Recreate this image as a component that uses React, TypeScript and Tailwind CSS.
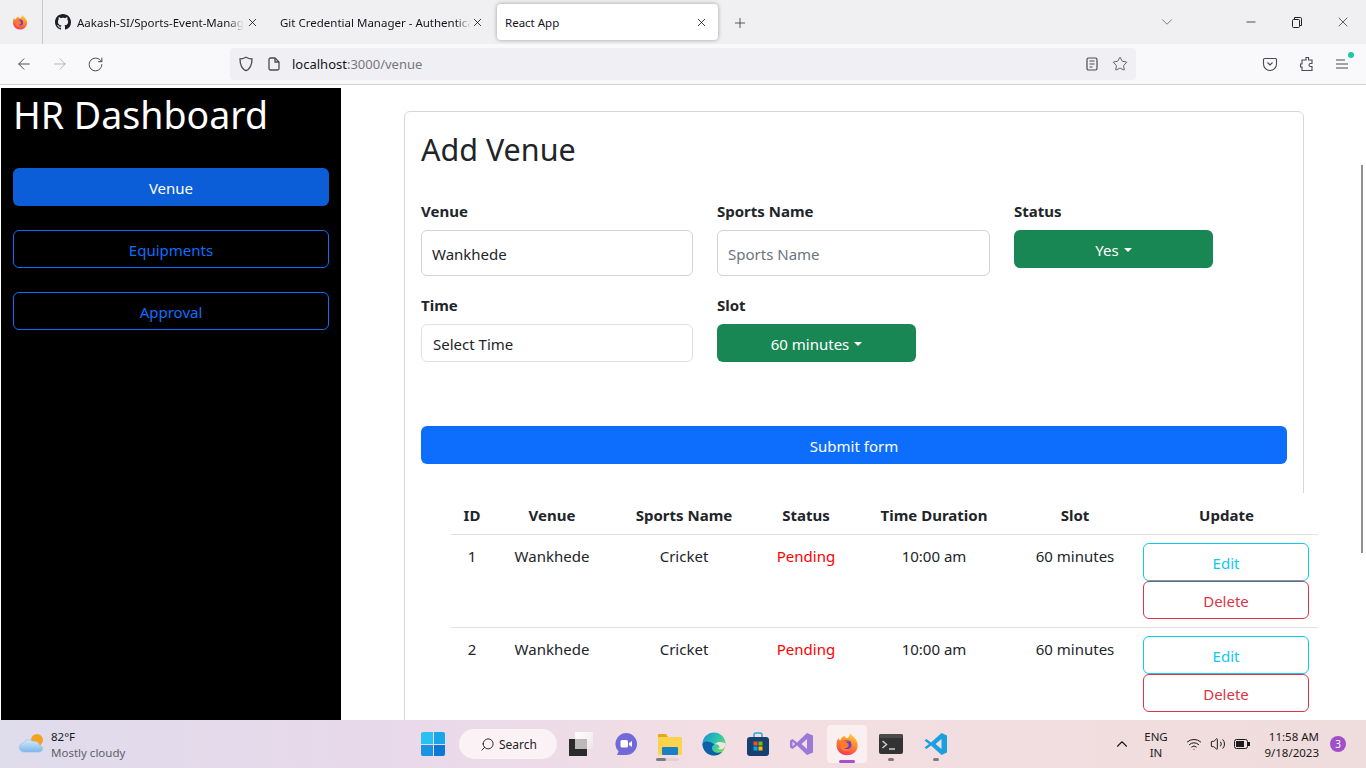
import { X, Plus, ChevronDown, ChevronUp, Minus, ArrowLeft, ArrowRight, RotateCw, Star, Search, Wifi, Volume2 } from "lucide-react";

const FONT = "font-['Noto_Sans','Open_Sans',sans-serif]";

const ROWS = [
  { id: 1, venue: "Wankhede", sport: "Cricket", status: "Pending", time: "10:00 am", slot: "60 minutes" },
  { id: 2, venue: "Wankhede", sport: "Cricket", status: "Pending", time: "10:00 am", slot: "60 minutes" },
];

function FirefoxLogo({ size = 16 }: { size?: number }) {
  return (
    <svg width={size} height={size} viewBox="0 0 32 32">
      <defs>
        <linearGradient id="ffBody" x1="0.7" y1="0" x2="0.3" y2="1">
          <stop offset="0" stopColor="#ffd43a" />
          <stop offset="0.45" stopColor="#ff8a2a" />
          <stop offset="1" stopColor="#f0365c" />
        </linearGradient>
      </defs>
      <path d="M20 1c1 3 4 4 6 7 3 3 5 7 4 12-1 7-7 11-14 11C8 31 2 25 2 17c0-4 1-7 3-9 0 2 1 3 2 3 1-3 3-5 6-6 0 2 2 3 4 3 2-2 3-4 3-7z" fill="url(#ffBody)" />
      <circle cx="15.5" cy="17" r="6.5" fill="#6e3bd0" />
      <path d="M9 14c2-3 8-4 11-1-3-1-5 0-6 1 3 0 5 2 4 5-1 2-4 3-6 2 4 4 11 1 11-5 0 6-6 11-12 9-4-2-5-7-2-11z" fill="#ff7a2a" />
    </svg>
  );
}

function GithubMark() {
  return (
    <svg width={16} height={16} viewBox="0 0 16 16" fill="#1b1f24">
      <path d="M8 0C3.58 0 0 3.58 0 8c0 3.54 2.29 6.53 5.47 7.59.4.07.55-.17.55-.38 0-.19-.01-.82-.01-1.49-2.01.37-2.53-.49-2.69-.94-.09-.23-.48-.94-.82-1.13-.28-.15-.68-.52-.01-.53.63-.01 1.08.58 1.23.82.72 1.21 1.87.87 2.33.66.07-.52.28-.87.51-1.07-1.78-.2-3.64-.89-3.64-3.95 0-.87.31-1.59.82-2.15-.08-.2-.36-1.02.08-2.12 0 0 .67-.21 2.2.82.64-.18 1.32-.27 2-.27s1.36.09 2 .27c1.53-1.04 2.2-.82 2.2-.82.44 1.1.16 1.92.08 2.12.51.56.82 1.27.82 2.15 0 3.07-1.87 3.75-3.65 3.95.29.25.54.73.54 1.48 0 1.07-.01 1.93-.01 2.2 0 .21.15.46.55.38A8.01 8.01 0 0016 8c0-4.42-3.58-8-8-8z" />
    </svg>
  );
}

function BrowserTabs() {
  return (
    <div className="flex h-[44px] bg-[#f0f0f2] text-[11.5px] text-[#15141a]">
      <div className="flex w-[43px] items-center justify-center border-r border-[#c8c8cc] pr-[3px]">
        <FirefoxLogo />
      </div>
      <div className="flex w-[226px] items-center pl-[12px]">
        <GithubMark />
        <span className="ml-[6px] w-[167px] overflow-hidden whitespace-nowrap pt-[1px] [mask-image:linear-gradient(90deg,#000_90%,transparent)]">Aakash-SI/Sports-Event-Manage</span>
        <X size={13} strokeWidth={1.5} className="ml-[2px]" />
      </div>
      <div className="flex w-[228px] items-center pl-[11px]">
        <span className="w-[191px] overflow-hidden whitespace-nowrap pt-[1px] [mask-image:linear-gradient(90deg,#000_92%,transparent)]">Git Credential Manager - Authentica</span>
        <X size={13} strokeWidth={1.5} />
      </div>
      <div className="mt-[4px] flex h-[36px] w-[221px] items-center justify-between rounded-[4px] bg-white pl-[8px] pr-[10px] shadow-[0_0_4px_rgba(0,0,0,0.35)]">
        <span className="pt-[1px]">React App</span>
        <X size={13} strokeWidth={1.5} />
      </div>
      <Plus size={16} strokeWidth={1.25} className="ml-[14px] mt-[15px] text-[#3a3a3e]" />
      <ChevronDown size={18} strokeWidth={1} className="ml-[410px] mt-[13px] text-[#55555a]" />
      <Minus size={14} strokeWidth={1.25} className="ml-[68px] mt-[15px]" />
      <svg width={12} height={12} viewBox="0 0 12 12" fill="none" stroke="#222" className="ml-[33px] mt-[16px]">
        <rect x="1.5" y="3.5" width="7" height="8" rx="1" />
        <path d="M3.5 3.5V1.5h6a1 1 0 011 1v7h-2" />
      </svg>
      <X size={16} strokeWidth={1} className="ml-[32px] mt-[14px]" />
    </div>
  );
}

function BrowserToolbar() {
  return (
    <div className="flex h-[41px] items-center border-b border-[#cfcfd4] bg-[#f9f9fb] text-[#4a4a50]">
      <ArrowLeft size={18} strokeWidth={1.3} className="ml-[15px]" />
      <ArrowRight size={18} strokeWidth={1.3} className="ml-[18px] text-[#b4b4b8]" />
      <RotateCw size={17} strokeWidth={1.4} className="ml-[18px]" />
      <div className="ml-[126px] flex h-[32px] w-[906px] items-center rounded-[4px] bg-[#f0f0f4] text-[13px]">
        <svg width={16} height={16} viewBox="0 0 16 16" fill="none" stroke="#4a4a50" strokeWidth="1.3" className="ml-[8px]">
          <path d="M8 1.3c2 1.2 4 1.7 6 1.7 0 6-2 10-6 11.7C4 13 2 9 2 3c2 0 4-.5 6-1.7z" />
        </svg>
        <svg width={14} height={14} viewBox="0 0 14 14" fill="none" stroke="#4a4a50" strokeWidth="1.3" className="ml-[13px]">
          <path d="M2 2.5a1.5 1.5 0 011.5-1.5H8l4 4v6.5a1.5 1.5 0 01-1.5 1.5h-7A1.5 1.5 0 012 11.500z" />
          <path d="M8 1v4h4" />
        </svg>
        <span className="ml-[11px] pt-[1px] text-[#15141a]">localhost</span>
        <span className="pt-[1px] text-[#77777c]">:3000/venue</span>
        <svg width={14} height={14} viewBox="0 0 14 14" fill="none" stroke="#4a4a50" strokeWidth="1.2" className="ml-auto">
          <rect x="2" y="1" width="10" height="12" rx="1.5" />
          <path d="M4.500 4h5M4.500 7h5M4.500 10h3" />
        </svg>
        <Star size={16} strokeWidth={1.3} className="ml-[13px] mr-[8px]" />
      </div>
      <svg width={16} height={16} viewBox="0 0 16 16" fill="none" stroke="#4a4a50" strokeWidth="1.1" className="ml-[126px]">
        <path d="M2.500 2.500h11a1 1 0 011 1V8a6.500 6.500 0 01-13 0V3.500a1 1 0 011-1z" />
        <path d="M5.500 6.500L8 9l2.500-2.500" />
      </svg>
      <svg width={16} height={16} viewBox="0 0 16 16" fill="none" stroke="#4a4a50" strokeWidth="1.1" className="ml-[21px]">
        <path d="M7 1.500h2.500V4H13v3.500h-1.500a1.500 1.500 0 000 3H13V14.500H3V11H1.500V8H3V4h4z" />
      </svg>
      <div className="relative ml-[19px]">
        <svg width={16} height={16} viewBox="0 0 16 16" fill="none" stroke="#4a4a50" strokeWidth="1.1">
          <path d="M2 4h9M2 8h12M2 12h12" />
        </svg>
        <span className="absolute -right-[4px] -top-[4px] h-[6px] w-[6px] rounded-full bg-[#1fc9a6]" />
      </div>
    </div>
  );
}

function Sidebar() {
  return (
    <aside className="ml-px mt-[3px] flex h-[632px] w-[340px] flex-col bg-black px-[12px]">
      <h1 className="mt-[2px] text-[37.5px] leading-[50px] text-white">HR Dashboard</h1>
      <button className="mt-[28px] h-[38px] w-[316px] rounded-[6px] bg-[#0b5ed7] pt-[2px] text-[15px] text-white">Venue</button>
      <button className="mt-[24px] h-[38px] w-[316px] rounded-[6px] border border-[#0d6efd] pt-[2px] text-[15px] text-[#0d6efd]">Equipments</button>
      <button className="mt-[24px] h-[38px] w-[316px] rounded-[6px] border border-[#0d6efd] pt-[2px] text-[15px] text-[#0d6efd]">Approval</button>
    </aside>
  );
}

function Field({ label, children }: { label: string; children: React.ReactNode }) {
  return (
    <div>
      <label className="mb-[8px] block text-[15px] font-bold leading-[21px] text-[#212529]">{label}</label>
      {children}
    </div>
  );
}

function GreenDropdown({ text }: { text: string }) {
  return (
    <button className="flex h-[38px] w-[199px] items-center justify-center rounded-[6px] bg-[#198754] pt-[2px] text-[15px] text-white">
      {text}
      <span className="ml-[5px] h-0 w-0 border-x-[4.500px] border-t-[4.500px] border-x-transparent border-t-white" />
    </button>
  );
}

function VenueTable() {
  return (
    <div className="relative -mr-[31px] ml-[30px] mt-[29px] bg-white">
      <table className="w-[867px] table-fixed border-collapse text-center text-[15px] text-[#212529]">
        <colgroup>
          <col className="w-[42px]" />
          <col className="w-[118px]" />
          <col className="w-[146px]" />
          <col className="w-[98px]" />
          <col className="w-[158px]" />
          <col className="w-[124px]" />
          <col className="w-[181px]" />
        </colgroup>
        <thead>
          <tr className="h-[41px] border-b border-[#dee2e6]">
            {["ID", "Venue", "Sports Name", "Status", "Time Duration", "Slot", "Update"].map((h) => (
              <th key={h} className="pt-[3px] font-bold last:pr-[2px]">{h}</th>
            ))}
          </tr>
        </thead>
        <tbody>
          {ROWS.map((r) => (
            <tr key={r.id} className="border-b border-[#dee2e6] align-top">
              <td className="pt-[10px]">{r.id}</td>
              <td className="pt-[10px]">{r.venue}</td>
              <td className="pt-[10px]">{r.sport}</td>
              <td className="pt-[10px] text-[#ff0000]">{r.status}</td>
              <td className="pt-[10px]">{r.time}</td>
              <td className="pt-[10px]">{r.slot}</td>
              <td className="py-[8px] pl-[6px]">
                <button className="block h-[38px] w-[166px] rounded-[6px] border border-[#0dcaf0] pt-[4px] text-[#0dcaf0]">Edit</button>
                <button className="block h-[38px] w-[166px] rounded-[6px] border border-[#dc3545] pt-[4px] text-[#dc3545]">Delete</button>
              </td>
            </tr>
          ))}
        </tbody>
      </table>
    </div>
  );
}

function VenuePage() {
  return (
    <main className="ml-[63px] mt-[26px] w-[900px]">
      <div className="rounded-[6px] border border-[#d5d8db] px-[16px] pt-[16px] pb-[40px]">
        <h2 className="text-[30.5px] leading-[42px] text-[#212529]">Add Venue</h2>
        <div className="mt-[31px] grid grid-cols-[272px_273px_1fr] gap-x-[24px]">
          <Field label="Venue">
            <div className="flex h-[46px] items-center rounded-[6px] border border-[#ced4da] px-[10px] pt-[2px] text-[15px] text-[#212529]">Wankhede</div>
          </Field>
          <Field label="Sports Name">
            <div className="flex h-[46px] items-center rounded-[6px] border border-[#ced4da] px-[10px] pt-[2px] text-[15px] text-[#6c757d]">Sports Name</div>
          </Field>
          <Field label="Status">
            <GreenDropdown text="Yes" />
          </Field>
          <div className="mt-[19px]">
            <Field label="Time">
              <div className="flex h-[38px] items-center rounded-[6px] border border-[#dee2e6] px-[11px] pt-[2px] text-[15px] text-[#212529]">Select Time</div>
            </Field>
          </div>
          <div className="mt-[19px]">
            <Field label="Slot">
              <GreenDropdown text="60 minutes" />
            </Field>
          </div>
        </div>
        <button className="mt-[64px] h-[38px] w-full rounded-[6px] bg-[#0d6efd] pt-[2px] text-[15px] text-white">Submit form</button>
        <VenueTable />
      </div>
    </main>
  );
}

function WeatherIcon() {
  return (
    <svg width={28} height={24} viewBox="0 0 28 24">
      <defs>
        <linearGradient id="cloud" x1="0" y1="0" x2="0" y2="1">
          <stop offset="0" stopColor="#d9e9f8" />
          <stop offset="1" stopColor="#7db6ea" />
        </linearGradient>
      </defs>
      <circle cx="19" cy="8" r="6" fill="#f5a11d" />
      <path d="M6 20a4.500 4.500 0 01-.5-9C7 7.500 12 6.500 15 9.500c3-1 6.500 1 6.500 4 2.500 0 3 1.500 3 3.500s-1.500 3-3.500 3z" fill="url(#cloud)" stroke="#8fc0ec" strokeWidth="0.6" />
    </svg>
  );
}

function TaskDot() {
  return <span className="absolute -bottom-[5px] left-[9px] h-[3px] w-[6px] rounded-full bg-[#7f7a7c]" />;
}

function TaskbarApps() {
  return (
    <div className="ml-[283px] flex items-center">
      <div className="grid h-[24px] w-[24px] grid-cols-2 gap-[1px]">
        <span className="rounded-tl-[2px] bg-[#29c0f2]" />
        <span className="rounded-tr-[2px] bg-[#1aa5ea]" />
        <span className="rounded-bl-[2px] bg-[#1993e2]" />
        <span className="rounded-br-[2px] bg-[#0b78d4]" />
      </div>
      <div className="ml-[14px] flex h-[30px] w-[98px] items-center rounded-full bg-[#fbf2f6] pl-[21px] text-[12px] text-[#222]">
        <Search size={15} strokeWidth={1.5} className="-scale-x-100" />
        <span className="ml-[4px] pt-[2px]">Search</span>
      </div>
      <svg width={24} height={24} viewBox="0 0 24 24" className="ml-[12px]">
        <defs>
          <linearGradient id="taskLight" x1="0" y1="0" x2="1" y2="1">
            <stop offset="0" stopColor="#ffffff" />
            <stop offset="1" stopColor="#ebe6e8" />
          </linearGradient>
        </defs>
        <rect x="0" y="7" width="18" height="17" fill="#2a2a2a" />
        <rect x="6" y="0" width="18" height="17" fill="url(#taskLight)" />
        <rect x="6" y="7" width="12" height="10" fill="#bcb8ba" />
      </svg>
      <svg width={24} height={24} viewBox="0 0 24 24" className="ml-[21px]">
        <path d="M12 1a11 11 0 110 22H3l1.500-3.500A11 11 0 0112 1z" fill="#7269d8" />
        <rect x="6.500" y="8" width="7.500" height="7.500" rx="1.500" fill="#fff" />
        <path d="M15 11l3-2v6l-3-2z" fill="#fff" />
      </svg>
      <div className="relative ml-[20px] h-[24px] w-[24px]">
        <svg width={24} height={24} viewBox="0 0 24 24">
          <path d="M0 3a1 1 0 011-1h7l2 3h13v6H0z" fill="#e6a817" />
          <rect y="5" width="24" height="18" rx="1" fill="#fcd34d" />
          <rect x="4" y="15" width="16" height="8" rx="1" fill="#1a7fc4" />
        </svg>
        <span className="absolute -bottom-[5px] -left-[2px] h-[3px] w-[23px] rounded-full bg-[#e6cfd2]" />
        <span className="absolute -bottom-[5px] -left-[2px] h-[3px] w-[10px] rounded-full bg-[#7f7a7c]" />
      </div>
      <svg width={24} height={24} viewBox="0 0 24 24" className="ml-[20px]">
        <defs>
          <linearGradient id="edgeA" x1="0" y1="0" x2="1" y2="0.7">
            <stop offset="0" stopColor="#1a8fd0" />
            <stop offset="0.55" stopColor="#2cc3b0" />
            <stop offset="1" stopColor="#79de62" />
          </linearGradient>
        </defs>
        <circle cx="12" cy="12" r="11.500" fill="url(#edgeA)" />
        <path d="M.5 12C.5 18 5.500 23.500 12 23.500c3 0 6-1 8-3.500-5 2-10 0-10-4 0-2 1-3 2.500-3.500C8 9 2 8 .5 12z" fill="#0c5fa8" />
        <path d="M12.500 12.500c2.500-1 5 .5 5 2.500 0 1-1 1.500-2 1.500 2 1.500 5 1 7-1 1-2 1-3 .9-4-2-1-7-3-10.900 1z" fill="#f6e2e4" />
      </svg>
      <svg width={24} height={24} viewBox="0 0 24 24" className="ml-[20px]">
        <path d="M8 6V3a2 2 0 012-2h4a2 2 0 012 2v3" fill="none" stroke="#2aa6e0" strokeWidth="1.500" />
        <rect x="1" y="5" width="22" height="19" rx="3" fill="#15406f" />
        <rect x="7.500" y="9.500" width="4" height="4" fill="#f25022" />
        <rect x="12.500" y="9.500" width="4" height="4" fill="#7fba00" />
        <rect x="7.500" y="14.500" width="4" height="4" fill="#00a4ef" />
        <rect x="12.500" y="14.500" width="4" height="4" fill="#ffb900" />
      </svg>
      <svg width={24} height={24} viewBox="0 0 24 24" className="ml-[20px]">
        <path d="M17 1l6 2.500v17L17 23 7 13.500 2.500 17 0 15.500v-7L2.500 7 7 10.500zM17 7l-5.500 5 5.500 5z" fill="#9a7ad6" />
        <path d="M2.500 9.500v5L5 12z" fill="#e2d8f5" />
      </svg>
      <div className="relative ml-[13px] flex h-[38px] w-[40px] items-center justify-center rounded-[4px] bg-[#faf0f2]">
        <FirefoxLogo size={24} />
        <span className="absolute bottom-0 left-[12px] h-[3px] w-[16px] rounded-full bg-[#a94fc9]" />
      </div>
      <div className="relative ml-[12px] h-[24px] w-[24px]">
        <svg width={24} height={24} viewBox="0 0 24 24">
          <rect y="2" width="24" height="20" rx="2" fill="#333" />
          <rect y="2" width="24" height="4" rx="2" fill="#4a4a4a" />
          <path d="M3.500 9l4 3.500-4 3.500" fill="none" stroke="#ccc" strokeWidth="1.500" />
          <path d="M10 17h6" stroke="#ccc" strokeWidth="1.500" />
        </svg>
        <TaskDot />
      </div>
      <div className="relative ml-[21px] h-[24px] w-[24px]">
        <svg width={24} height={24} viewBox="0 0 24 24">
          <path d="M17.500 1L23 3.500v17L17.500 23 7 13.500 2.500 17 .5 15.500 5 12 .5 8.500 2.500 7 7 10.500zM17.500 7l-6 5 6 5z" fill="#1a9fe0" />
        </svg>
        <TaskDot />
      </div>
    </div>
  );
}

function Taskbar() {
  return (
    <footer className="flex h-[48px] items-center bg-[linear-gradient(90deg,#dfdcec_0%,#e9d9ea_30%,#f3dfe3_55%,#efdcdc_100%)] text-[12px] text-[#1b1b1b]">
      <div className="ml-[18px] flex w-[120px] items-center">
        <WeatherIcon />
        <div className="ml-[5px] pt-[2px] text-[11.500px] leading-[16px]">
          <div>82°F</div>
          <div className="text-[#5f5f68]">Mostly cloudy</div>
        </div>
      </div>
      <TaskbarApps />
      <ChevronUp size={18} strokeWidth={1.500} className="ml-[165px]" />
      <div className="ml-[5px] w-[40px] pt-[2px] text-center text-[11.500px] leading-[16px]">
        <div>ENG</div>
        <div>IN</div>
      </div>
      <Wifi size={16} strokeWidth={1.500} className="ml-[10px]" />
      <Volume2 size={16} strokeWidth={1.500} className="ml-[8px]" />
      <svg width={16} height={10} viewBox="0 0 16 10" className="ml-[8px]">
        <rect x="0.500" y="0.500" width="13" height="9" rx="2" fill="none" stroke="#1b1b1b" />
        <rect x="2" y="2" width="8" height="6" fill="#1b1b1b" />
        <rect x="14" y="3" width="2" height="4" fill="#1b1b1b" />
      </svg>
      <div className="ml-[2px] w-[67px] pt-[2px] text-right text-[11.500px] leading-[16px]">
        <div>11:58 AM</div>
        <div>9/18/2023</div>
      </div>
      <span className="ml-[11px] flex h-[16px] w-[16px] items-center justify-center rounded-full bg-[#a04fc8] text-[10px] text-white">3</span>
    </footer>
  );
}

export default function App() {
  return (
    <div className={`${FONT} flex h-[768px] w-[1366px] flex-col overflow-hidden bg-white`}>
      <BrowserTabs />
      <BrowserToolbar />
      <div className="relative flex h-[635px] overflow-hidden bg-white">
        <Sidebar />
        <VenuePage />
        <span className="absolute right-[3px] top-[80px] h-[388px] w-[2px] bg-[#8f8f8f]" />
      </div>
      <Taskbar />
    </div>
  );
}
